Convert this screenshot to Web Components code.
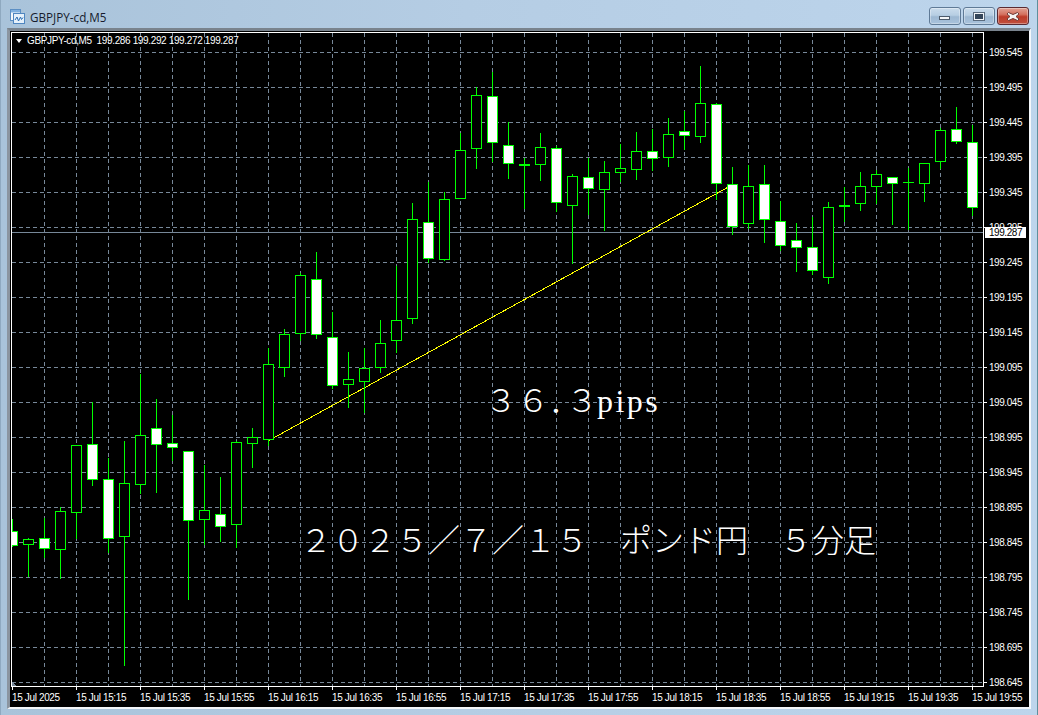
<!DOCTYPE html>
<html>
<head>
<meta charset="utf-8">
<title>GBPJPY-cd,M5</title>
<style>
  html, body { margin: 0; padding: 0; background: #b9d1ea; overflow: hidden; }
</style>
</head>
<body>
<mt-window caption="GBPJPY-cd,M5">
  <mt-chart info="GBPJPY-cd,M5  199.286 199.292 199.272 199.287" last="199.287">
    <mt-label x="473" y="347">３６<span style="letter-spacing:-15px">．</span>３<span style="font-family:'Liberation Serif',serif;letter-spacing:2.4px;margin-left:-1px">pips</span></mt-label>
    <mt-label x="288" y="487">２０２５／７／１５　ポンド円　５分足</mt-label>
  </mt-chart>
</mt-window>

<script>
// [wick top, body top, body bottom, wick bottom, white body]  one row per bar, 16px apart from x=12
const BARS = [
  [519,531,545,546,1],[538,539,544,576,0],[518,538,548,557,1],[507,511,549,578,0],
  [445,445,512,538,0],[402,444,479,485,1],[458,479,538,552,1],[441,483,536,665,0],
  [374,435,484,493,0],[399,428,444,492,1],[415,443,447,460,1],[451,451,520,599,1],
  [465,510,519,544,0],[477,514,526,541,1],[441,442,524,547,0],[428,437,443,467,0],
  [348,364,439,445,0],[329,334,367,376,0],[273,275,333,340,0],[252,279,334,338,1],
  [312,337,385,388,1],[352,379,384,407,0],[348,368,381,412,0],[320,343,367,372,0],
  [266,320,340,352,0],[203,219,318,323,0],[182,222,258,262,1],[192,199,259,260,0],
  [133,150,198,198,0],[87,95,148,168,0],[72,96,142,161,1],[122,145,163,178,1],
  [158,164,165,208,0],[133,147,164,180,0],[146,148,202,211,1],[174,176,205,263,0],
  [158,177,188,214,1],[161,172,189,230,0],[144,168,172,181,0],[132,151,169,179,0],
  [129,151,158,170,1],[118,134,157,166,0],[111,131,135,149,1],[66,103,136,142,0],
  [103,104,183,199,1],[167,184,226,234,1],[165,186,223,228,0],[165,184,219,242,1],
  [201,221,245,250,1],[223,240,247,271,1],[217,247,270,274,1],[202,207,277,283,0],
  [187,205,206,221,0],[172,186,203,210,0],[170,174,186,203,0],[177,177,183,224,1],
  [168,182,182,229,0],[163,163,183,201,0],[128,130,161,168,0],[107,129,141,143,1],
  [125,142,207,215,1]
];
const TIMES = ['2025','15:15','15:35','15:55','16:15','16:35','16:55','17:15','17:35','17:55','18:15','18:35','18:55','19:15','19:35','19:55'];

class MtWindow extends HTMLElement {
  constructor() {
    super();
    this._root = this.attachShadow({mode: 'open'});
  }
  connectedCallback() {
    this._root.innerHTML = `
    <style>
      :host {
        display: flex;
        flex-direction: column;
        box-sizing: border-box;
        width: 1038px;
        height: 715px;
        padding: 0 6px 6px 6px;
        background: linear-gradient(90deg, #a9c3da 0, #b5cde4 45%, #bdd5ec 100%);
        border-left: 1px solid #8fa9c0;
        border-right: 1px solid #5f8f9c;
        font-family: "Liberation Sans", sans-serif;
      }
      .title {
        display: flex;
        align-items: flex-start;
        height: 28px;
        flex: none;
      }
      .icon { margin: 9px 5px 0 3px; flex: none; }
      .caption {
        flex: 1;
        margin-top: 9px;
        font: 11.7px/16px "Open Sans", sans-serif;
        color: #161b2c;
      }
      .buttons { display: flex; gap: 2px; margin-top: 7px; margin-right: 2px; }
      .client {
        flex: 1;
        min-height: 0;
        display: flex;
        background: #000;
        border-left: 3px solid #8b95a0;
        border-top: 3px solid #79838d;
        border-right: 2px solid #f4f7fa;
        border-bottom: 2px solid #f4f7fa;
      }
    </style>
    <div class="title">
      <svg class="icon" width="15" height="15" viewBox="0 0 15 15">
        <rect x=".5" y=".5" width="10" height="11" fill="#f4f8fc" stroke="#5c8fc4"/>
        <rect x="1" y="1" width="9" height="2.5" fill="#7fb0e0"/>
        <rect x="3.5" y="4.5" width="11" height="10" fill="#e6f1fb" stroke="#4f86c0"/>
        <path d="M5 11l2-3 1.5 4 2-4 1 2.5 1.5-2" fill="none" stroke="#2c6fb5"/>
      </svg>
      <div class="caption">${this.getAttribute('caption')}</div>
      <div class="buttons">
        <mt-caption-button kind="min"></mt-caption-button>
        <mt-caption-button kind="max"></mt-caption-button>
        <mt-caption-button kind="close"></mt-caption-button>
      </div>
    </div>
    <div class="client"><slot></slot></div>`;
  }
}

class MtCaptionButton extends HTMLElement {
  constructor() {
    super();
    this._root = this.attachShadow({mode: 'open'});
  }
  connectedCallback() {
    const glyphs = {
      min: '<rect x="10.500" y="8.500" width="10" height="3" fill="#f4f6f8" stroke="#4d5b6b"/>',
      max: '<rect x="11.500" y="5.500" width="9" height="6" fill="#34465a" stroke="#f2f5f8"/><rect x="10.500" y="4.500" width="11" height="8" fill="none" stroke="#5a6b7e"/>',
      close: '<path d="M11.500 4.500l4.500 2 4.500-2 1.500 1.500-3 2.500 3 2.500-1.500 1.500-4.500-2-4.500 2-1.500-1.500 3-2.500-3-2.500z" fill="#f6f3f2" stroke="#6e3a36"/>'
    };
    const kind = this.getAttribute('kind');
    const bg = kind === 'close'
      ? 'linear-gradient(#e0a195 0, #d4715f 40%, #bd3b29 55%, #c0513f 100%)'
      : 'linear-gradient(#cadcec 0, #b7cee3 45%, #9db8d2 55%, #a9c3dc 100%)';
    const edge = kind === 'close' ? '#5a2a32' : '#5f7a96';
    this._root.innerHTML = `
    <style>
      :host {
        display: block;
        box-sizing: border-box;
        width: 32px;
        height: 18px;
        background: ${bg};
        border: 1px solid ${edge};
        border-radius: 3px;
        box-shadow: inset 0 0 0 1px rgba(255,255,255,.35);
      }
      svg { display: block; width: 30px; height: 16px; }
    </style>
    <svg viewBox="1 0 30 16">${glyphs[kind]}</svg>`;
  }
}

class MtChart extends HTMLElement {
  constructor() {
    super();
    this._root = this.attachShadow({mode: 'open'});
  }
  connectedCallback() {
    // the svg uses page pixels, so bars read the same as in the BARS table
    let grid = '';
    for (let x = 44; x <= 972; x += 32) grid += `M${x + .5} 33V686`;
    for (let y = 52; y <= 682; y += 35) grid += `M12 ${y + .5}H983`;
    let bars = '';
    BARS.forEach((b, i) => {
      const x = 12 + i * 16;
      bars += `<rect x="${x}" y="${b[0]}" width="1" height="${b[3] - b[0] + 1}" fill="#00ff00"/>`;
      bars += `<rect x="${x - 5}" y="${b[1]}" width="11" height="${b[2] - b[1] + 1}" fill="#00ff00"/>`;
      if (b[2] - b[1] > 1) {
        bars += `<rect x="${x - 4}" y="${b[1] + 1}" width="9" height="${b[2] - b[1] - 1}" fill="${b[4] ? '#fff' : '#000'}"/>`;
      }
    });
    this._root.innerHTML = `
    <style>
      :host {
        flex: 1;
        display: grid;
        grid-template-columns: 973px 1fr;
        grid-template-rows: 655px 1fr;
        padding: 1px 0 0 1px;
        min-width: 0;
        overflow: hidden;
        background: #000;
        color: #fff;
        font: 10px/11px "Liberation Sans", sans-serif;
      }
      .plot {
        position: relative;
        box-sizing: border-box;
        border: 1px solid #fff;
        overflow: hidden;
      }
      .plot svg { display: block; }
      .info {
        position: absolute;
        left: 4px;
        top: 2px;
        display: flex;
        align-items: center;
        white-space: pre;
        letter-spacing: -.36px;
      }
      .info i {
        width: 0;
        height: 0;
        margin-right: 5px;
        border: 3.5px solid transparent;
        border-top: 4px solid #fff;
        border-bottom: 0;
      }
      .prices {
        position: relative;
        display: flex;
        flex-direction: column;
        padding-top: 3px;
      }
      .price {
        height: 35px;
        flex: none;
        display: flex;
        align-items: center;
        gap: 2px;
        letter-spacing: -.45px;
      }
      .price::before { content: ""; width: 3px; height: 1px; background: #fff; }
      .last {
        position: absolute;
        left: 1px;
        top: 195px;
        width: 41px;
        height: 11px;
        background: #fff;
        color: #000;
        text-align: center;
        letter-spacing: -.45px;
      }
      .times {
        grid-column: 1 / 3;
        display: flex;
        padding-left: 1px;
        overflow: hidden;
      }
      .time {
        flex: none;
        width: 64px;
        white-space: nowrap;
        letter-spacing: -.36px;
      }
      .time::before { content: ""; display: block; width: 1px; height: 3px; background: #fff; margin-bottom: 2px; }
    </style>
    <div class="plot">
      <svg width="971" height="653" viewBox="12 33 971 653" shape-rendering="crispEdges">
        <path d="${grid}" fill="none" stroke="#778899" stroke-dasharray="4 3"/>
        <path d="M12 232.500H983" stroke="#778899"/>
        <path d="M12 682l5 4h-5z" fill="#778899"/>
        <path d="M268 441L732 185" stroke="#ffff00" fill="none"/>
        ${bars}
      </svg>
      <div class="info"><i></i>${this.getAttribute('info')}</div>
      <slot></slot>
    </div>
    <div class="prices">
      ${Array.from({length: 19}, (_, i) => `<div class="price">${(199.545 - i * .05).toFixed(3)}</div>`).join('')}
      <div class="last">${this.getAttribute('last')}</div>
    </div>
    <div class="times">
      ${TIMES.map(t => `<div class="time">15 Jul ${t}</div>`).join('')}
    </div>`;
  }
}

class MtLabel extends HTMLElement {
  constructor() {
    super();
    this._root = this.attachShadow({mode: 'open'});
  }
  connectedCallback() {
    this._root.innerHTML = `
    <style>
      :host {
        position: absolute;
        left: ${this.getAttribute('x')}px;
        top: ${this.getAttribute('y')}px;
        white-space: nowrap;
        color: #fff;
        font: 300 32px/36px "Noto Sans CJK JP", "Liberation Serif", serif;
      }
    </style>
    <slot></slot>`;
  }
}

window.customElements.define('mt-window', MtWindow);
window.customElements.define('mt-caption-button', MtCaptionButton);
window.customElements.define('mt-chart', MtChart);
window.customElements.define('mt-label', MtLabel);
</script>
</body>
</html>
